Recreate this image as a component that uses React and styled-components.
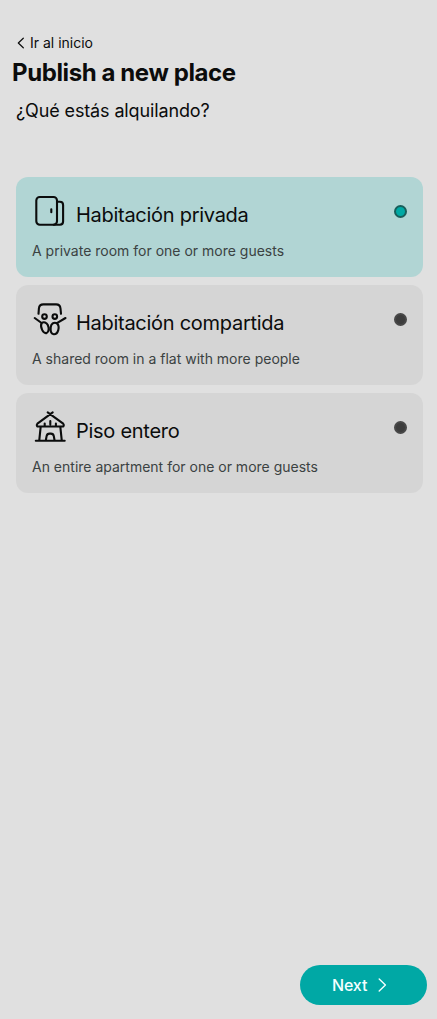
import React, { useState } from "react";
import styled, { createGlobalStyle } from "styled-components";

const GlobalStyle = createGlobalStyle`
  *, *::before, *::after { box-sizing: border-box; }
  body {
    margin: 0;
    background: #e0e0e0;
    color: #0b0c0c;
    font-family: Inter, "Liberation Sans", sans-serif;
  }
`;

const Page = styled.main`
  display: flex;
  flex-direction: column;
  min-height: 100vh;
  padding: 33px 10px 14px 12px;
`;

const BackLink = styled.a`
  display: flex;
  align-items: center;
  gap: 3px;
  padding-left: 4px;
  font-size: 14px;
  line-height: 20px;
  svg { width: 11px; height: 12px; }
`;

const Heading = styled.h1`
  margin: 4px 0 0;
  font-size: 24px;
  font-weight: 700;
  line-height: 32px;
  letter-spacing: -0.4px;
`;

const Question = styled.h2`
  margin: 8px 0 0 4px;
  font-size: 18px;
  font-weight: 400;
  line-height: 28px;
  letter-spacing: -0.13px;
`;

const OptionList = styled.div`
  display: flex;
  flex-direction: column;
  gap: 8px;
  margin: 52px 4px 0;
`;

const OptionCard = styled.button`
  display: flex;
  justify-content: space-between;
  align-items: flex-start;
  height: 100px;
  padding: 16px;
  border: 0;
  border-radius: 12px;
  background: ${(p) => (p.$selected ? "#b1d5d4" : "#d5d5d5")};
  color: inherit;
  font: inherit;
  text-align: left;
`;

const OptionTitle = styled.span`
  display: flex;
  align-items: flex-end;
  gap: 8px;
  height: 36px;
  font-size: 20px;
  font-weight: 400;
  line-height: 28px;
  letter-spacing: -0.28px;
`;

const OptionText = styled.span`
  display: block;
  margin-top: 12px;
  color: #3b4242;
  font-size: 14px;
  line-height: 20px;
`;

const Radio = styled.span`
  width: 13px;
  height: 13px;
  margin-top: 12px;
  border: 2px solid ${(p) => (p.$selected ? "#185f5b" : "#484848")};
  border-radius: 50%;
  background: ${(p) => (p.$selected ? "#00a9a4" : "#3d3d3d")};
`;

const LineIcon = styled.svg`
  flex: none;
  width: 36px;
  height: 36px;
  fill: none;
  stroke: currentColor;
  stroke-width: ${(p) => p.$weight || 2.1};
  stroke-linecap: round;
  stroke-linejoin: round;
`;

const Footer = styled.footer`
  display: flex;
  justify-content: flex-end;
  margin-top: auto;
`;

const NextButton = styled.button`
  display: flex;
  align-items: center;
  gap: 8px;
  width: 127px;
  height: 40px;
  padding: 0 32px;
  border: 0;
  border-radius: 20px;
  background: #00a8a5;
  color: #f4ffff;
  font: 500 16px/24px Inter, "Liberation Sans", sans-serif;
  letter-spacing: -0.15px;
  svg { width: 14px; height: 16px; }
`;

const DoorIcon = () => (
  <LineIcon viewBox="0 0 36 36">
    <rect x="4.3" y="4" width="20.7" height="27.7" rx="3.5" />
    <path d="M25 8.8h2.9q3.2 0 3.2 3.2v16.5q0 3.2-3.2 3.2h-6.2M19.3 16.3v3" />
  </LineIcon>
);

const SharedIcon = () => (
  <LineIcon viewBox="0 0 36 36">
    <path d="M6.5 12.8 6.9 7.5Q7.3 3.4 11.3 3.4h12.8q4 0 4.4 4.1l.5 5.3M2.7 17 9.6 22M33.5 17l-8.6 5.2" />
    <circle cx="12.5" cy="15.6" r="2.3" />
    <circle cx="22.8" cy="15.6" r="2.3" />
    <path d="M9.6 22c2.2-1.5 5-.6 6.2 2 1.4 3.2 1 7-1 7.9-3.7 1.4-7-6.1-5.2-9.9zM24.9 22.2c-3.2-1.5-5.9.8-6.2 4.2-.3 3.5.7 6.6 3 6.8 4.4.3 6.7-7.6 3.2-11z" />
  </LineIcon>
);

const HutIcon = () => (
  <LineIcon viewBox="0 0 36 36">
    <path d="M15.7 3.3 31.2 14.6Q32.4 16 31.4 17.5H5.2Q4.2 16 5.4 14.6L20.7 3.3M8.7 17.6 7.2 31.8M28.3 17.6 29.8 31.8M3.8 31.8h28.9M13.8 31.5l.8-4.4q.4-2.5 3-2.5h1.2q2.6 0 3 2.5l.8 4.4M12.7 14.5v2.9M18.3 12v3.4M23.9 14.5v2.9" />
  </LineIcon>
);

const options = [
  { title: "Habitación privada", text: "A private room for one or more guests", Icon: DoorIcon },
  { title: "Habitación compartida", text: "A shared room in a flat with more people", Icon: SharedIcon },
  { title: "Piso entero", text: "An entire apartment for one or more guests", Icon: HutIcon },
];

export default function App() {
  const [selected, setSelected] = useState(0);
  return (
    <>
      <GlobalStyle />
      <Page>
        <BackLink>
          <LineIcon viewBox="0 0 11 12" $weight={1.2}>
            <path d="M7.3 1.2 2.3 6l5 4.8" />
          </LineIcon>
          Ir al inicio
        </BackLink>
        <Heading>Publish a new place</Heading>
        <Question>¿Qué estás alquilando?</Question>
        <OptionList>
          {options.map(({ title, text, Icon }, i) => (
            <OptionCard key={title} $selected={i === selected} onClick={() => setSelected(i)}>
              <span>
                <OptionTitle>
                  <Icon />
                  {title}
                </OptionTitle>
                <OptionText>{text}</OptionText>
              </span>
              <Radio $selected={i === selected} />
            </OptionCard>
          ))}
        </OptionList>
        <Footer>
          <NextButton>
            Next
            <LineIcon viewBox="0 0 14 16" $weight={1.4}>
              <path d="M4.2 2l6.2 6-6.2 6" />
            </LineIcon>
          </NextButton>
        </Footer>
      </Page>
    </>
  );
}
